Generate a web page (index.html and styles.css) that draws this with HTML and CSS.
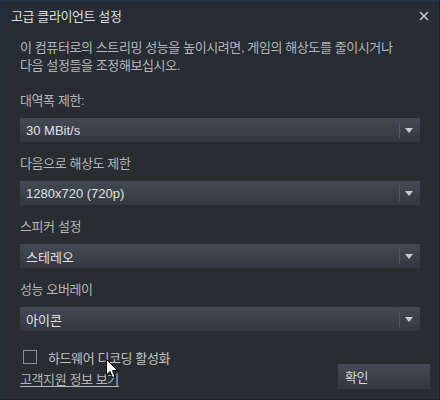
FILE: index.html
```html
<!DOCTYPE html>
<html lang="ko">
<head>
<meta charset="utf-8">
<link rel="stylesheet" href="styles.css">
</head>
<body>
<div class="dialog">
  <div class="titlebar">
    <span class="title">고급 클라이언트 설정</span>
    <svg class="close" width="10" height="10" viewBox="0 0 10 10"><path d="M1 1 L9 9 M9 1 L1 9" stroke="#c4c6c8" stroke-width="1.6" fill="none"/></svg>
  </div>
  <div class="content">
    <p class="desc">이 컴퓨터로의 스트리밍 성능을 높이시려면, 게임의 해상도를 줄이시거나<br>다음 설정들을 조정해보십시오.</p>
    <div class="field">
      <div class="label">대역폭 제한:</div>
      <div class="select"><span class="value">30 MBit/s</span><span class="sep"></span><span class="arrow"></span></div>
    </div>
    <div class="field">
      <div class="label">다음으로 해상도 제한</div>
      <div class="select"><span class="value">1280x720 (720p)</span><span class="sep"></span><span class="arrow"></span></div>
    </div>
    <div class="field">
      <div class="label">스피커 설정</div>
      <div class="select"><span class="value">스테레오</span><span class="sep"></span><span class="arrow"></span></div>
    </div>
    <div class="field">
      <div class="label">성능 오버레이</div>
      <div class="select"><span class="value">아이콘</span><span class="sep"></span><span class="arrow"></span></div>
    </div>
  </div>
  <div class="footer">
    <div class="footer-left">
      <div class="check-row"><span class="checkbox"></span><span class="check-label">하드웨어 디코딩 활성화</span></div>
      <a class="link">고객지원 정보 보기</a>
    </div>
    <div class="button">확인</div>
  </div>
  <svg class="cursor" width="13" height="20" viewBox="0 0 13 20"><path d="M0.5 0.5 L0.5 16 L4 12.5 L6.5 18.5 L9 17.5 L6.5 11.5 L11.5 11.5 Z" fill="#ffffff" stroke="#000000" stroke-width="1"/></svg>
</div>
</body>
</html>
```

FILE: styles.css
```css
html, body {
  margin: 0;
  padding: 0;
  background: #292c31;
}
.dialog {
  position: relative;
  width: 440px;
  height: 400px;
  box-sizing: border-box;
  border: 1px solid #1e2126;
  border-top-color: #1c3550;
  border-left-color: #1d3045;
  background: linear-gradient(to bottom, #262c35 0px, #292c31 120px, #292c31 100%);
  font-family: "Liberation Sans", "Noto Sans CJK KR", sans-serif;
  font-size: 13px;
  letter-spacing: -0.4px;
  color: #b6b8ba;
  display: flex;
  flex-direction: column;
}
.titlebar {
  height: 33px;
  display: flex;
  align-items: center;
  justify-content: space-between;
  padding: 0 10px 0 10px;
}
.title {
  color: #dcdedf;
  line-height: 18px;
}
.close {
  display: block;
  margin-top: -2px;
}
.content {
  padding: 6px 19px 0 19px;
}
.desc {
  margin: 0 0 17px 0;
  line-height: 18px;
  color: #b4b6b8;
}
.field {
  margin-bottom: 13px;
}
.label {
  line-height: 18px;
  margin-bottom: 8px;
  color: #b4b6b8;
}
.select {
  position: relative;
  height: 24px;
  display: flex;
  align-items: center;
  background: linear-gradient(to bottom, #434853 0%, #3b4049 55%, #33373f 100%);
}
.value {
  flex: 1;
  padding-left: 6px;
  letter-spacing: 0;
  color: #dfe2e5;
}
.sep {
  width: 1px;
  height: 16px;
  background: #4b5670;
}
.arrow {
  width: 0;
  height: 0;
  margin: 1px 7px 0 5px;
  border-left: 4px solid transparent;
  border-right: 4px solid transparent;
  border-top: 5px solid #c9cbcd;
}
.footer {
  display: flex;
  justify-content: space-between;
  align-items: flex-end;
  padding: 0 9px 10px 19px;
  margin-top: 4px;
}
.footer-left {
  display: flex;
  flex-direction: column;
  gap: 5px;
}
.check-row {
  display: flex;
  align-items: center;
  height: 18px;
  padding-left: 3px;
}
.checkbox {
  width: 12px;
  height: 12px;
  border: 1px solid #8d9094;
  margin-right: 11px;
}
.check-label {
  color: #c2c4c6;
}
.link {
  line-height: 18px;
  color: #b4b6b8;
  text-decoration: underline;
  text-underline-offset: 2px;
}
.button {
  width: 85px;
  height: 25px;
  padding-left: 7px;
  display: flex;
  align-items: center;
  background: linear-gradient(to bottom, #454a54 0%, #3a3f48 60%, #33373f 100%);
  color: #d4d6d8;
}
.cursor {
  position: absolute;
  left: 105px;
  top: 358px;
}
```
